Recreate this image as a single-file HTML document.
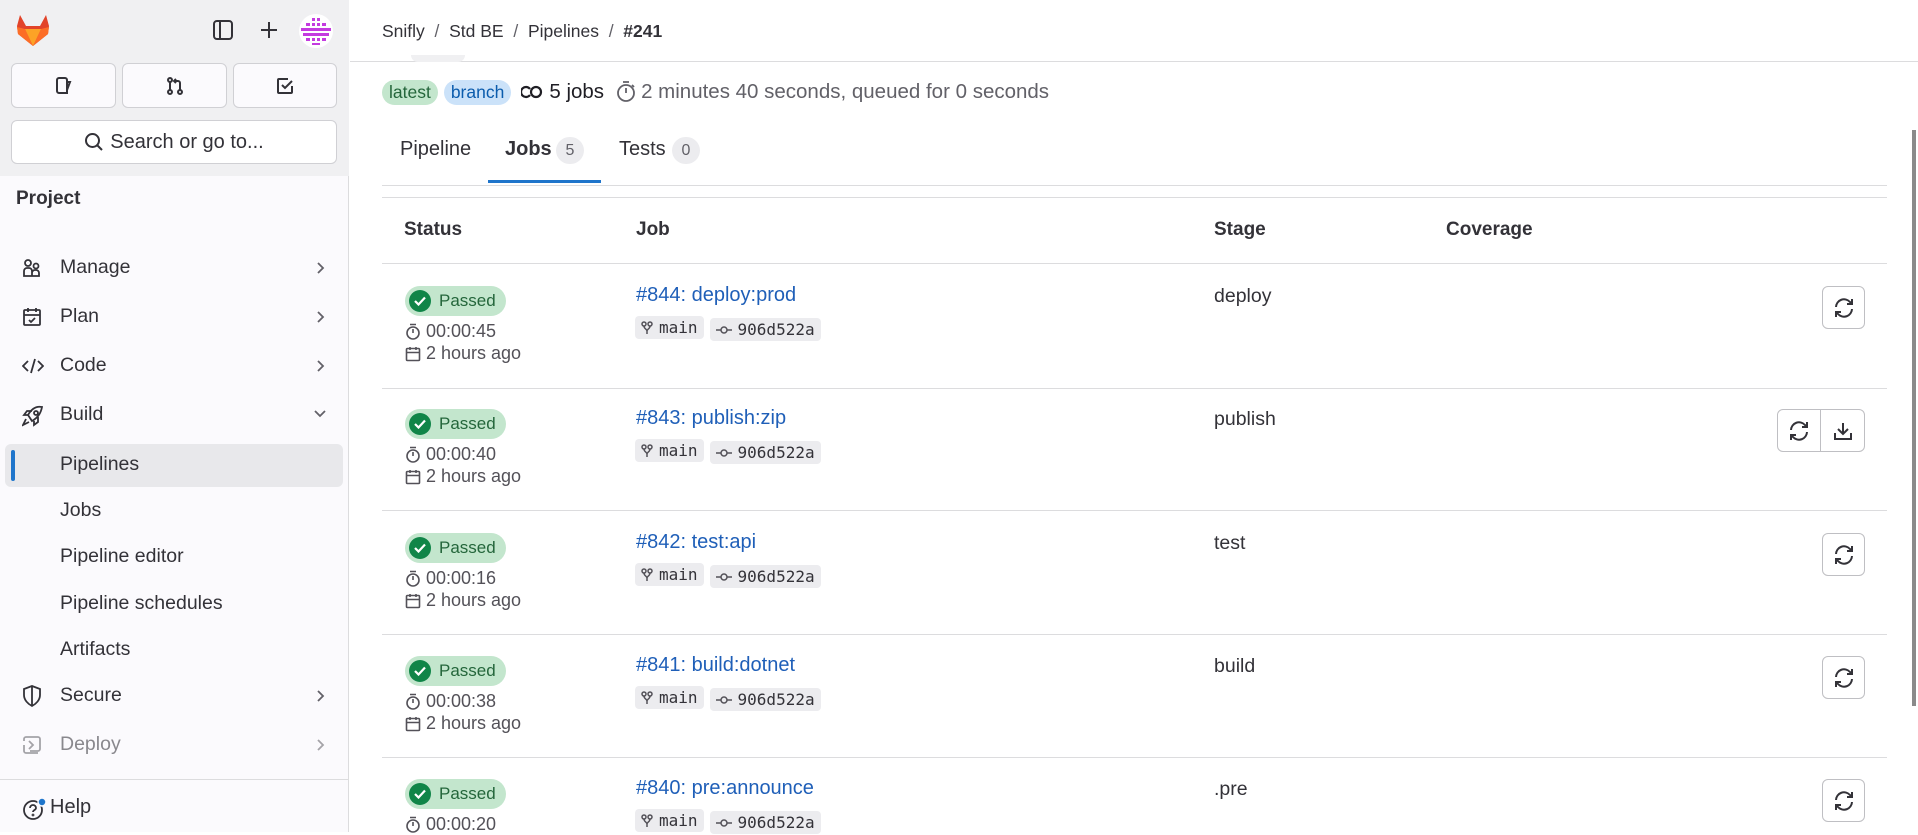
<!DOCTYPE html>
<html><head><meta charset="utf-8"><style>
*{box-sizing:border-box;margin:0;padding:0}
body{width:1918px;height:832px;overflow:hidden;font-family:"Liberation Sans",sans-serif;color:#333238;background:#fff;position:relative;font-size:17px}
.a{position:absolute}
.sb{left:0;top:0;width:349px;height:832px;background:#fbfafd;border-right:1px solid #dcdcde}
.sbt{left:0;top:0;width:349px;height:176px;background:#f0f0f2}
.btn{border:1px solid #d0d0d4;border-radius:6px;background:#fbfafd;display:flex;align-items:center;justify-content:center}
.nav{left:22px;font-size:19.5px;color:#333238}
.ic{left:22px}
.chev{left:316px}
.sub{left:60px;font-size:19.5px}
.top{left:350px;top:0;right:0;height:62px;border-bottom:1px solid #dcdcde;background:#fff}
.mut{color:#626168}
.pass{width:101px;height:30px;border-radius:15px;background:#c3e6cd;display:flex;align-items:center;font-size:17px;color:#24663b}
.pass i{width:22px;height:22px;border-radius:50%;background:#108548;margin:0 8px 0 4px;display:flex;align-items:center;justify-content:center}
.lnk{color:#1f5fb8;font-size:20px}
.tag{height:23px;background:#ececef;border-radius:4px;font-family:"DejaVu Sans Mono",monospace;font-size:16px;display:inline-flex;align-items:center;padding:0 6px;margin-right:6px;color:#333238}
.tag svg{margin-right:6px}
.rb{width:43px;height:43px;border:1px solid #bfbfc3;border-radius:6px;background:#fff;display:flex;align-items:center;justify-content:center}
.hr{left:382px;width:1505px;height:1px;background:#dcdcde}
.ti{left:405px;font-size:18px;color:#535158;display:flex;align-items:center}
.ti svg{margin-right:5px}
.st{left:1214px;top:22px;font-size:19.5px}
</style></head><body>
<div class="a sb"></div><div class="a sbt"></div>
<svg class="a" style="left:16px;top:14px" width="34" height="33" viewBox="0 0 34 33"><path d="M17 32L2 20 1 12 4 1 10 12h14l6-11 3 11-1 8z" fill="#e24329"/><path d="M17 32L2 20 1 13l8 2 8 17z" fill="#fc6d26"/><path d="M17 32l15-12 1-7-8 2z" fill="#fc6d26"/><path d="M17 32l-8-17h16z" fill="#fca326"/></svg>
<svg class="a" style="left:213px;top:20px" width="20" height="20" viewBox="0 0 20 20" fill="none" stroke="#333238" stroke-width="2"><rect x="1" y="1" width="18" height="18" rx="3"/><path d="M7 1v18"/></svg>
<svg class="a" style="left:259px;top:20px" width="20" height="20" viewBox="0 0 20 20" stroke="#333238" stroke-width="2"><path d="M10 2v16M2 10h16"/></svg>
<svg class="a" style="left:299px;top:14px" width="34" height="34" viewBox="0 0 34 34"><circle cx="17" cy="17" r="17" fill="#fff"/><g fill="#c43be0"><rect x="13" y="4" width="3" height="3"/><rect x="18" y="4" width="3" height="3"/><rect x="7" y="9" width="4" height="3"/><rect x="13" y="9" width="3" height="3"/><rect x="18" y="9" width="3" height="3"/><rect x="23" y="9" width="4" height="3"/><rect x="2" y="14" width="30" height="3"/><rect x="4" y="19" width="26" height="3"/><rect x="7" y="24" width="4" height="3"/><rect x="13" y="24" width="3" height="3"/><rect x="18" y="24" width="3" height="3"/><rect x="23" y="24" width="4" height="3"/><rect x="13" y="29" width="8" height="2"/></g></svg>
<div class="a btn" style="left:11px;top:63px;width:105px;height:45px"><svg width="20" height="20" viewBox="0 0 20 20" fill="none" stroke="#333238" stroke-width="2"><path d="M3 4a2 2 0 012-2h6a2 2 0 012 2v13H5a2 2 0 01-2-2zM13 6h3l-3 8"/></svg></div>
<div class="a btn" style="left:122px;top:63px;width:105px;height:45px"><svg width="20" height="20" viewBox="0 0 20 20" fill="none" stroke="#333238" stroke-width="2"><circle cx="5" cy="4" r="2"/><circle cx="5" cy="16" r="2"/><circle cx="15" cy="16" r="2"/><path d="M5 6v8M15 14V7a2 2 0 00-2-2H9M11 3L9 5l2 2"/></svg></div>
<div class="a btn" style="left:233px;top:63px;width:104px;height:45px"><svg width="20" height="20" viewBox="0 0 20 20" fill="none" stroke="#333238" stroke-width="2"><path d="M17 10v6a1 1 0 01-1 1H4a1 1 0 01-1-1V4a1 1 0 011-1h9"/><path d="M7 9l3 3 7-7"/></svg></div>
<div class="a btn" style="left:11px;top:120px;width:326px;height:44px;background:#fff;font-size:20px;color:#333238"><svg width="20" height="20" viewBox="0 0 20 20" fill="none" stroke="#333238" stroke-width="2" style="margin-right:6px"><circle cx="8.5" cy="8.5" r="6.5"/><path d="M13.5 13.5L18 18"/></svg>Search or go to...</div>
<div class="a" style="left:16px;top:188px;font-size:19px;font-weight:bold">Project</div>
<svg class="a ic" style="top:258px" width="20" height="20" viewBox="0 0 20 20" fill="none" stroke="#333238" stroke-width="1.8"><circle cx="6" cy="5" r="3"/><circle cx="14" cy="8" r="2.5"/><path d="M2 18v-5a3 3 0 013-3h2a3 3 0 013 3v5zM10 18v-3a3 3 0 013-3h1a3 3 0 013 3v3z"/></svg>
<div class="a nav" style="left:60px;top:256px">Manage</div>
<svg class="a ic" style="top:307px" width="20" height="20" viewBox="0 0 20 20" fill="none" stroke="#333238" stroke-width="1.8"><rect x="2" y="3" width="16" height="15" rx="1"/><path d="M2 8h16M6 1v4M14 1v4M7 13l2 2 4-4"/></svg>
<div class="a nav" style="left:60px;top:305px">Plan</div>
<svg class="a ic" style="top:356px" width="22" height="20" viewBox="0 0 22 20" fill="none" stroke="#333238" stroke-width="1.8"><path d="M6 5l-5 5 5 5M16 5l5 5-5 5M13 3l-4 14"/></svg>
<div class="a nav" style="left:60px;top:354px">Code</div>
<svg class="a ic" style="top:405px" width="22" height="22" viewBox="0 0 22 22" fill="none" stroke="#333238" stroke-width="1.8"><path d="M6 10c4-7 9-9 14-8-1 5-3 10-10 14zM6 10H2l3-4h5M12 16v4l4-3v-5M4 14l-3 6 6-3"/><circle cx="14" cy="8" r="2"/></svg>
<div class="a nav" style="left:60px;top:403px">Build</div>
<svg class="a" style="left:313px;top:409px" width="14" height="10" viewBox="0 0 14 10" fill="none" stroke="#626168" stroke-width="1.8"><path d="M2 2l5 5 5-5"/></svg>
<div class="a" style="left:5px;top:444px;width:338px;height:43px;background:#e8e8eb;border-radius:6px"></div>
<div class="a" style="left:11px;top:450px;width:4px;height:31px;background:#1f75cb;border-radius:2px"></div>
<div class="a sub" style="top:453px">Pipelines</div>
<div class="a sub" style="top:499px">Jobs</div>
<div class="a sub" style="top:545px">Pipeline editor</div>
<div class="a sub" style="top:592px">Pipeline schedules</div>
<div class="a sub" style="top:638px">Artifacts</div>
<svg class="a ic" style="top:685px" width="20" height="22" viewBox="0 0 20 22" fill="none" stroke="#333238" stroke-width="1.8"><path d="M10 1L2 4v6c0 5 4 9 8 11 4-2 8-6 8-11V4zM10 1v20"/></svg>
<div class="a nav" style="left:60px;top:684px">Secure</div>
<svg class="a ic" style="top:735px" width="20" height="20" viewBox="0 0 20 20" fill="none" stroke="#a4a3a8" stroke-width="1.8"><path d="M2 6V4a2 2 0 012-2h12a2 2 0 012 2v10a2 2 0 01-2 2H8M2 10v6a2 2 0 002 2h12M7 6l4 4-4 4"/></svg>
<div class="a nav" style="left:60px;top:733px;color:#89888d">Deploy</div>
<svg class="a chev" style="top:261px" width="10" height="14" viewBox="0 0 10 14" fill="none" stroke="#626168" stroke-width="1.8"><path d="M2 2l5 5-5 5"/></svg>
<svg class="a chev" style="top:310px" width="10" height="14" viewBox="0 0 10 14" fill="none" stroke="#626168" stroke-width="1.8"><path d="M2 2l5 5-5 5"/></svg>
<svg class="a chev" style="top:359px" width="10" height="14" viewBox="0 0 10 14" fill="none" stroke="#626168" stroke-width="1.8"><path d="M2 2l5 5-5 5"/></svg>
<svg class="a chev" style="top:689px" width="10" height="14" viewBox="0 0 10 14" fill="none" stroke="#626168" stroke-width="1.8"><path d="M2 2l5 5-5 5"/></svg>
<svg class="a chev" style="top:738px" width="10" height="14" viewBox="0 0 10 14" fill="none" stroke="#a4a3a8" stroke-width="1.8"><path d="M2 2l5 5-5 5"/></svg>
<div class="a" style="left:0;top:779px;width:349px;height:1px;background:#dcdcde"></div>
<svg class="a" style="left:22px;top:797px" width="24" height="24" viewBox="0 0 24 24" fill="none" stroke="#333238" stroke-width="1.8"><circle cx="11" cy="13" r="9"/><path d="M8 11a3 3 0 116 0c0 2-3 2-3 4"/><circle cx="11" cy="18" r=".5"/><circle cx="20" cy="5" r="4" fill="#1f75cb" stroke="#fbfafd" stroke-width="1.5"/></svg>
<div class="a" style="left:50px;top:796px;font-size:20px">Help</div>

<div class="a top"></div>
<div class="a" style="left:382px;top:21px;font-size:17.5px;color:#333238">Snifly &nbsp;<span class="mut">/</span>&nbsp; Std BE &nbsp;<span class="mut">/</span>&nbsp; Pipelines &nbsp;<span class="mut">/</span>&nbsp; <b>#241</b></div>
<div class="a" style="left:411px;top:55px;width:54px;height:7px;background:#f0f0f2;border-radius:0 0 8px 8px"></div>
<div class="a" style="left:382px;top:78px;height:28px;display:flex;align-items:center;font-size:20.5px;color:#626168">
<span style="background:#c3e6cd;color:#24663b;border-radius:14px;padding:2px 7px;font-size:17.5px;margin-right:6px">latest</span>
<span style="background:#cbe2f9;color:#0b5cad;border-radius:14px;padding:2px 7px;font-size:17.5px;margin-right:10px">branch</span>
<svg width="22" height="14" viewBox="0 0 22 14" fill="none" stroke="#1f1e24" stroke-width="2.2" style="margin-right:6px"><path d="M9 4a5 5 0 100 6"/><circle cx="15" cy="7" r="5"/></svg><span style="color:#1f1e24">5 jobs</span>
<svg width="20" height="22" viewBox="0 0 20 22" fill="none" stroke="#626168" stroke-width="1.8" style="margin:0 5px 0 12px"><circle cx="10" cy="12" r="8"/><path d="M7 1h6M10 12V7M16 4l2 2"/></svg>
2 minutes 40 seconds, queued for 0 seconds</div>
<div class="a" style="left:400px;top:138px;font-size:20px">Pipeline</div>
<div class="a" style="left:505px;top:138px;font-size:20px;font-weight:bold">Jobs</div>
<div class="a" style="left:556px;top:137px;width:28px;height:27px;border-radius:14px;background:#ececef;color:#626168;font-size:16px;text-align:center;line-height:27px">5</div>
<div class="a" style="left:488px;top:180px;width:113px;height:3px;background:#1f75cb"></div>
<div class="a" style="left:619px;top:138px;font-size:20px">Tests</div>
<div class="a" style="left:672px;top:137px;width:28px;height:27px;border-radius:14px;background:#ececef;color:#626168;font-size:16px;text-align:center;line-height:27px">0</div>
<div class="a hr" style="top:185px"></div>
<div class="a hr" style="top:197px"></div>
<div class="a" style="left:404px;top:219px;font-size:19px;font-weight:bold">Status</div>
<div class="a" style="left:636px;top:219px;font-size:19px;font-weight:bold">Job</div>
<div class="a" style="left:1214px;top:219px;font-size:19px;font-weight:bold">Stage</div>
<div class="a" style="left:1446px;top:219px;font-size:19px;font-weight:bold">Coverage</div>
<div class="a hr" style="top:263px"></div>
<div class="a" style="left:1912px;top:130px;width:4px;height:576px;background:#8a8a8a"></div>

<div class="a" style="left:0;top:263px;width:1918px">
 <div class="a pass" style="left:405px;top:23px"><i><svg width="12" height="10" viewBox="0 0 12 10" fill="none" stroke="#fff" stroke-width="2.2"><path d="M1 5l3.5 3.5L11 1.5"/></svg></i>Passed</div>
 <div class="a ti" style="top:58px"><svg width="16" height="17" viewBox="0 0 16 17" fill="none" stroke="#535158" stroke-width="1.6"><circle cx="8" cy="10" r="6"/><path d="M5 1.5h6M8 10V6"/></svg>00:00:45</div>
 <div class="a ti" style="top:80px"><svg width="16" height="16" viewBox="0 0 16 16" fill="none" stroke="#535158" stroke-width="1.6"><rect x="1.5" y="2.5" width="13" height="12" rx="1"/><path d="M1.5 6.5h13M5 1v3M11 1v3"/></svg>2 hours ago</div>
 <div class="a lnk" style="left:636px;top:21px">#844: deploy:prod</div>
 <div class="a" style="left:635px;top:53px"><span class="tag"><svg width="12" height="14" viewBox="0 0 12 14" fill="none" stroke="#535158" stroke-width="1.5"><circle cx="3" cy="3" r="2"/><circle cx="9" cy="3" r="2"/><path d="M3 5c0 3 3 3 3 5v3M9 5c0 3-3 3-3 5"/></svg>main</span><span class="tag"><svg width="16" height="10" viewBox="0 0 16 10" fill="none" stroke="#535158" stroke-width="1.5"><circle cx="8" cy="5" r="3"/><path d="M0 5h5M11 5h5"/></svg>906d522a</span></div>
 <div class="a st">deploy</div>
 <div class="a rb" style="left:1822px;top:23px"><svg width="22" height="22" viewBox="0 0 22 22" fill="none" stroke="#333238" stroke-width="2"><path d="M3 10a8 8 0 0114-5l2 2M19 12a8 8 0 01-14 5l-2-2M19 2v5h-5M3 20v-5h5"/></svg></div>
</div>
<div class="a hr" style="top:388px"></div>
<div class="a" style="left:0;top:386px;width:1918px">
 <div class="a pass" style="left:405px;top:23px"><i><svg width="12" height="10" viewBox="0 0 12 10" fill="none" stroke="#fff" stroke-width="2.2"><path d="M1 5l3.5 3.5L11 1.5"/></svg></i>Passed</div>
 <div class="a ti" style="top:58px"><svg width="16" height="17" viewBox="0 0 16 17" fill="none" stroke="#535158" stroke-width="1.6"><circle cx="8" cy="10" r="6"/><path d="M5 1.5h6M8 10V6"/></svg>00:00:40</div>
 <div class="a ti" style="top:80px"><svg width="16" height="16" viewBox="0 0 16 16" fill="none" stroke="#535158" stroke-width="1.6"><rect x="1.5" y="2.5" width="13" height="12" rx="1"/><path d="M1.5 6.5h13M5 1v3M11 1v3"/></svg>2 hours ago</div>
 <div class="a lnk" style="left:636px;top:21px">#843: publish:zip</div>
 <div class="a" style="left:635px;top:53px"><span class="tag"><svg width="12" height="14" viewBox="0 0 12 14" fill="none" stroke="#535158" stroke-width="1.5"><circle cx="3" cy="3" r="2"/><circle cx="9" cy="3" r="2"/><path d="M3 5c0 3 3 3 3 5v3M9 5c0 3-3 3-3 5"/></svg>main</span><span class="tag"><svg width="16" height="10" viewBox="0 0 16 10" fill="none" stroke="#535158" stroke-width="1.5"><circle cx="8" cy="5" r="3"/><path d="M0 5h5M11 5h5"/></svg>906d522a</span></div>
 <div class="a st">publish</div>
 <div class="a" style="left:1777px;top:23px;width:88px;height:43px;border:1px solid #bfbfc3;border-radius:6px;display:flex">
  <div style="width:43px;border-right:1px solid #bfbfc3;display:flex;align-items:center;justify-content:center"><svg width="22" height="22" viewBox="0 0 22 22" fill="none" stroke="#333238" stroke-width="2"><path d="M3 10a8 8 0 0114-5l2 2M19 12a8 8 0 01-14 5l-2-2M19 2v5h-5M3 20v-5h5"/></svg></div>
  <div style="flex:1;display:flex;align-items:center;justify-content:center"><svg width="20" height="20" viewBox="0 0 20 20" fill="none" stroke="#333238" stroke-width="2"><path d="M10 2v11M5 8l5 5 5-5M2 12v6h16v-6"/></svg></div>
 </div>
</div>
<div class="a hr" style="top:510px"></div>
<div class="a" style="left:0;top:510px;width:1918px">
 <div class="a pass" style="left:405px;top:23px"><i><svg width="12" height="10" viewBox="0 0 12 10" fill="none" stroke="#fff" stroke-width="2.2"><path d="M1 5l3.5 3.5L11 1.5"/></svg></i>Passed</div>
 <div class="a ti" style="top:58px"><svg width="16" height="17" viewBox="0 0 16 17" fill="none" stroke="#535158" stroke-width="1.6"><circle cx="8" cy="10" r="6"/><path d="M5 1.5h6M8 10V6"/></svg>00:00:16</div>
 <div class="a ti" style="top:80px"><svg width="16" height="16" viewBox="0 0 16 16" fill="none" stroke="#535158" stroke-width="1.6"><rect x="1.5" y="2.5" width="13" height="12" rx="1"/><path d="M1.5 6.5h13M5 1v3M11 1v3"/></svg>2 hours ago</div>
 <div class="a lnk" style="left:636px;top:21px">#842: test:api</div>
 <div class="a" style="left:635px;top:53px"><span class="tag"><svg width="12" height="14" viewBox="0 0 12 14" fill="none" stroke="#535158" stroke-width="1.5"><circle cx="3" cy="3" r="2"/><circle cx="9" cy="3" r="2"/><path d="M3 5c0 3 3 3 3 5v3M9 5c0 3-3 3-3 5"/></svg>main</span><span class="tag"><svg width="16" height="10" viewBox="0 0 16 10" fill="none" stroke="#535158" stroke-width="1.5"><circle cx="8" cy="5" r="3"/><path d="M0 5h5M11 5h5"/></svg>906d522a</span></div>
 <div class="a st">test</div>
 <div class="a rb" style="left:1822px;top:23px"><svg width="22" height="22" viewBox="0 0 22 22" fill="none" stroke="#333238" stroke-width="2"><path d="M3 10a8 8 0 0114-5l2 2M19 12a8 8 0 01-14 5l-2-2M19 2v5h-5M3 20v-5h5"/></svg></div>
</div>
<div class="a hr" style="top:634px"></div>
<div class="a" style="left:0;top:633px;width:1918px">
 <div class="a pass" style="left:405px;top:23px"><i><svg width="12" height="10" viewBox="0 0 12 10" fill="none" stroke="#fff" stroke-width="2.2"><path d="M1 5l3.5 3.5L11 1.5"/></svg></i>Passed</div>
 <div class="a ti" style="top:58px"><svg width="16" height="17" viewBox="0 0 16 17" fill="none" stroke="#535158" stroke-width="1.6"><circle cx="8" cy="10" r="6"/><path d="M5 1.5h6M8 10V6"/></svg>00:00:38</div>
 <div class="a ti" style="top:80px"><svg width="16" height="16" viewBox="0 0 16 16" fill="none" stroke="#535158" stroke-width="1.6"><rect x="1.5" y="2.5" width="13" height="12" rx="1"/><path d="M1.5 6.5h13M5 1v3M11 1v3"/></svg>2 hours ago</div>
 <div class="a lnk" style="left:636px;top:21px">#841: build:dotnet</div>
 <div class="a" style="left:635px;top:53px"><span class="tag"><svg width="12" height="14" viewBox="0 0 12 14" fill="none" stroke="#535158" stroke-width="1.5"><circle cx="3" cy="3" r="2"/><circle cx="9" cy="3" r="2"/><path d="M3 5c0 3 3 3 3 5v3M9 5c0 3-3 3-3 5"/></svg>main</span><span class="tag"><svg width="16" height="10" viewBox="0 0 16 10" fill="none" stroke="#535158" stroke-width="1.5"><circle cx="8" cy="5" r="3"/><path d="M0 5h5M11 5h5"/></svg>906d522a</span></div>
 <div class="a st">build</div>
 <div class="a rb" style="left:1822px;top:23px"><svg width="22" height="22" viewBox="0 0 22 22" fill="none" stroke="#333238" stroke-width="2"><path d="M3 10a8 8 0 0114-5l2 2M19 12a8 8 0 01-14 5l-2-2M19 2v5h-5M3 20v-5h5"/></svg></div>
</div>
<div class="a hr" style="top:757px"></div>
<div class="a" style="left:0;top:756px;width:1918px">
 <div class="a pass" style="left:405px;top:23px"><i><svg width="12" height="10" viewBox="0 0 12 10" fill="none" stroke="#fff" stroke-width="2.2"><path d="M1 5l3.5 3.5L11 1.5"/></svg></i>Passed</div>
 <div class="a ti" style="top:58px"><svg width="16" height="17" viewBox="0 0 16 17" fill="none" stroke="#535158" stroke-width="1.6"><circle cx="8" cy="10" r="6"/><path d="M5 1.5h6M8 10V6"/></svg>00:00:20</div>
 <div class="a lnk" style="left:636px;top:21px">#840: pre:announce</div>
 <div class="a" style="left:635px;top:53px"><span class="tag"><svg width="12" height="14" viewBox="0 0 12 14" fill="none" stroke="#535158" stroke-width="1.5"><circle cx="3" cy="3" r="2"/><circle cx="9" cy="3" r="2"/><path d="M3 5c0 3 3 3 3 5v3M9 5c0 3-3 3-3 5"/></svg>main</span><span class="tag"><svg width="16" height="10" viewBox="0 0 16 10" fill="none" stroke="#535158" stroke-width="1.5"><circle cx="8" cy="5" r="3"/><path d="M0 5h5M11 5h5"/></svg>906d522a</span></div>
 <div class="a st">.pre</div>
 <div class="a rb" style="left:1822px;top:23px"><svg width="22" height="22" viewBox="0 0 22 22" fill="none" stroke="#333238" stroke-width="2"><path d="M3 10a8 8 0 0114-5l2 2M19 12a8 8 0 01-14 5l-2-2M19 2v5h-5M3 20v-5h5"/></svg></div>
</div>
</body></html>
